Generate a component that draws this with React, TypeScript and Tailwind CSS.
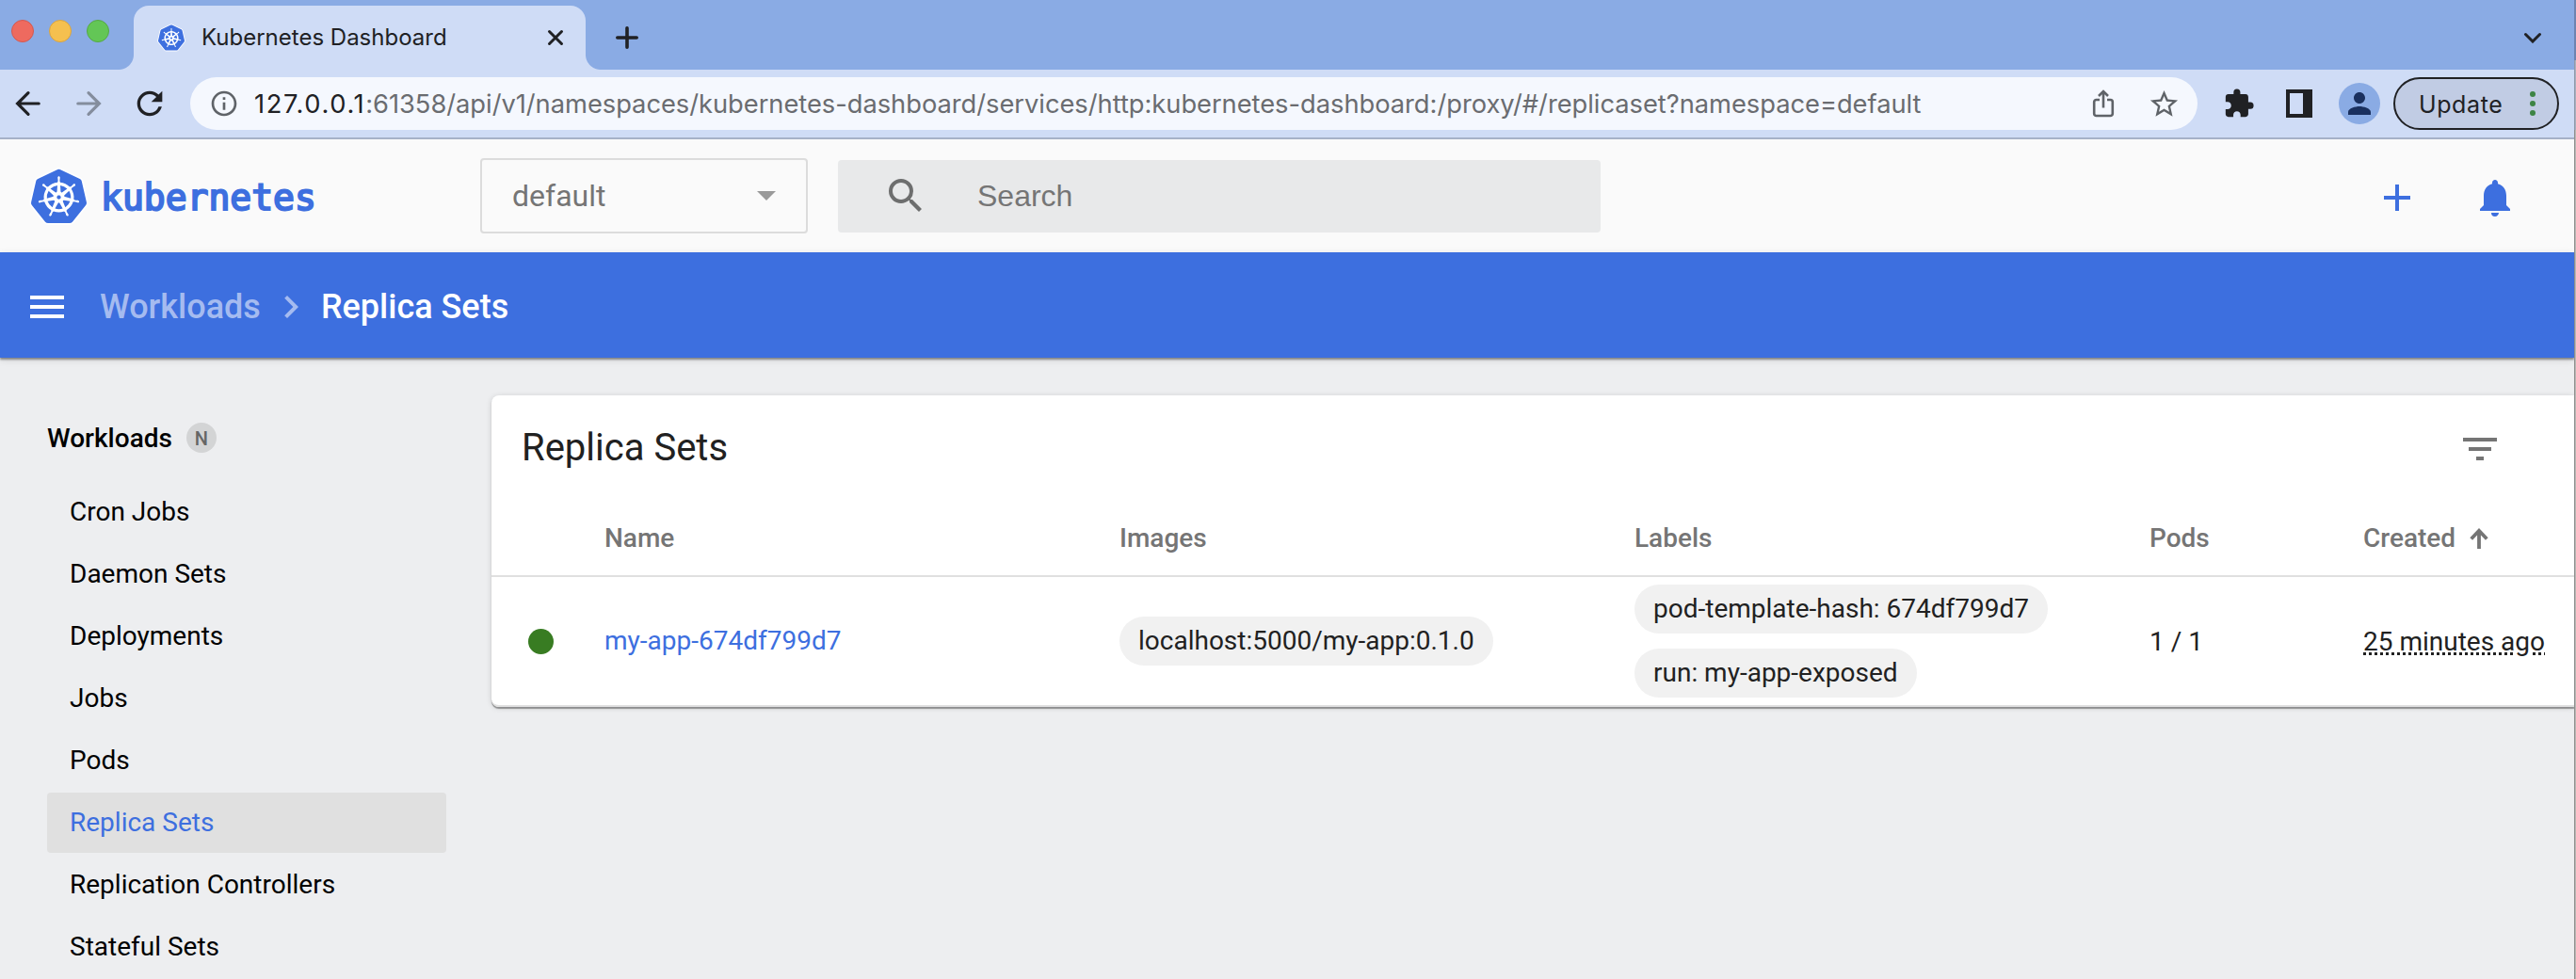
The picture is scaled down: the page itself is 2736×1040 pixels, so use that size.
import type { ReactNode } from 'react';
import { SiKubernetes } from 'react-icons/si';
import {
  MdAdd,
  MdChevronRight,
  MdExtension,
  MdFilterList,
  MdInfoOutline,
  MdMenu,
  MdNotifications,
  MdPerson,
  MdRefresh,
  MdSearch,
  MdStarOutline,
} from 'react-icons/md';

const navItems = [
  'Cron Jobs',
  'Daemon Sets',
  'Deployments',
  'Jobs',
  'Pods',
  'Replica Sets',
  'Replication Controllers',
  'Stateful Sets',
];

function KubeLogo({ className }: { className: string }) {
  return (
    <span className={`relative flex shrink-0 items-center justify-center ${className}`}>
      <span className="absolute inset-[20%] rounded-full bg-white" />
      <SiKubernetes className="relative h-full w-full overflow-visible stroke-white stroke-[1.4] text-[#3d6fdf] [paint-order:stroke]" />
    </span>
  );
}

function TabStrip() {
  return (
    <div className="flex h-[74px] shrink-0 items-end bg-[#8aabe4]">
      <div className="flex h-full w-[142px] shrink-0 gap-4 pl-3 pt-[21px]">
        <span className="size-6 rounded-full border border-[#d35950] bg-[#ee6a5f]" />
        <span className="size-6 rounded-full border border-[#d9a440] bg-[#f5c04f]" />
        <span className="size-6 rounded-full border border-[#55a944] bg-[#63c656]" />
      </div>
      <div className="relative flex h-[68px] w-[480px] shrink-0 items-center rounded-t-2xl bg-[#cfdcf6] pl-[26px]">
        <span className="absolute -left-4 bottom-0 size-4 bg-[radial-gradient(circle_at_0_0,transparent_15.5px,#cfdcf6_16.5px)]" />
        <span className="absolute -right-4 bottom-0 size-4 bg-[radial-gradient(circle_at_100%_0,transparent_15.5px,#cfdcf6_16.5px)]" />
        <KubeLogo className="size-7" />
        <span className="ml-[18px] w-[367px] font-[Inter,sans-serif] text-[24px] leading-none text-[#202124]">
          Kubernetes Dashboard
        </span>
        <svg viewBox="0 0 18 18" className="size-[18px]" fill="none" stroke="#202124" strokeWidth="3" strokeLinecap="round">
          <path d="M2.5 2.5l13 13M15.5 2.5l-13 13" />
        </svg>
      </div>
      <div className="flex h-[68px] flex-1 items-center justify-between pl-[31px] pr-[34px]">
        <svg viewBox="0 0 26 26" className="size-[26px]" fill="none" stroke="#202124" strokeWidth="3.6" strokeLinecap="round">
          <path d="M13 2.8v20.4M2.8 13h20.4" />
        </svg>
        <svg viewBox="0 0 20 12" className="h-3 w-5" fill="none" stroke="#202124" strokeWidth="3" strokeLinecap="round">
          <path d="M2.5 2.5l7.5 7.5l7.5-7.5" />
        </svg>
      </div>
    </div>
  );
}

function Arrow({ className }: { className: string }) {
  return (
    <svg viewBox="0 0 28 28" className={`size-7 ${className}`} fill="none" stroke="currentColor" strokeWidth="3.2" strokeLinecap="round">
      <path d="M2.6 14H25.2M14 2.7L2.6 14L14 25.3" />
    </svg>
  );
}

function Toolbar() {
  return (
    <div className="flex h-[74px] shrink-0 items-center border-b-2 border-[#a6b1c8] bg-[#cfdcf6] pl-4">
      <Arrow className="text-[#202124]" />
      <Arrow className="ml-9 rotate-180 text-[#848d9d]" />
      <MdRefresh className="ml-[31px] size-10 text-[#202124]" />
      <div className="ml-[23px] flex h-14 w-[2132px] shrink-0 items-center rounded-full bg-[#f5f8fe] pl-5 pr-[18px]">
        <MdInfoOutline className="size-8 text-[#5f6368]" />
        <div className="ml-4 flex-1 whitespace-nowrap pt-px font-[Inter,sans-serif] text-[27.3px] leading-none tracking-[-0.03px] text-[#6a6c70]">
          <span className="tracking-[1.6px] text-[#202124]">127.0.0.1</span>
          :61358/api/v1/namespaces/kubernetes-dashboard/services/http:kubernetes-dashboard:/proxy/#/replicaset?namespace=default
        </div>
        <svg viewBox="0 0 24 30" className="mr-[35px] h-[30px] w-6" fill="none" stroke="#5f6368" strokeWidth="2.6">
          <path d="M8 11H4.500a2.300 2.300 0 0 0-2.300 2.300v12.400a2.300 2.300 0 0 0 2.300 2.300h15a2.300 2.300 0 0 0 2.300-2.300V13.300a2.300 2.300 0 0 0-2.300-2.300H16M12 19.500V2.500M7 7l5-5l5 5" />
        </svg>
        <MdStarOutline className="size-[35px] text-[#5f6368]" />
      </div>
      <MdExtension className="ml-[27px] size-[34px] text-[#202124]" />
      <span className="ml-[33px] flex h-[30px] w-7 bg-[#202124] p-1">
        <span className="h-full w-[14px] bg-[#cfdcf6]" />
      </span>
      <span className="ml-7 flex size-11 items-center justify-center rounded-full bg-[#8aabe4]">
        <MdPerson className="size-9 text-[#1a305e]" />
      </span>
      <div className="ml-[14px] flex h-14 w-[176px] items-center rounded-full border-2 border-[#202124] bg-[#c1cce4] pl-[25px]">
        <span className="w-[118px] pt-0.5 font-[Inter,sans-serif] text-[25px] leading-none tracking-[0.6px] text-[#202124]">Update</span>
        <span className="flex flex-col gap-1">
          <span className="size-1.5 rounded-full bg-[#3d8445]" />
          <span className="size-1.5 rounded-full bg-[#3d8445]" />
          <span className="size-1.5 rounded-full bg-[#3d8445]" />
        </span>
      </div>
    </div>
  );
}

function Header() {
  return (
    <header className="flex h-[120px] shrink-0 items-center bg-[#fafafa] pl-[33px]">
      <KubeLogo className="size-[59px]" />
      <span className="ml-[15px] w-[403px] scale-y-[1.04] pt-px font-['DejaVu_Sans_Mono',monospace] text-[38px] leading-none text-[#3d6fdf] [-webkit-text-stroke:2px_#3d6fdf]">
        kubernetes
      </span>
      <div className="flex h-20 w-[348px] items-center justify-between rounded border-2 border-[#dcdcdc] pl-8 pr-8">
        <span className="font-[Roboto,sans-serif] text-[32px] leading-none text-[#757575]">default</span>
        <span className="h-0 w-0 border-x-[10px] border-t-[10px] border-x-transparent border-t-[#9a9a9a]" />
      </div>
      <div className="ml-8 flex h-[77px] w-[810px] items-center rounded bg-[#e8e9ea] pl-12">
        <MdSearch className="size-12 text-[#6d6e6e]" />
        <span className="ml-[52px] font-['Liberation_Sans',sans-serif] text-[32px] leading-none text-[#757575]">Search</span>
      </div>
      <div className="ml-auto mr-[60px] flex gap-14 pt-1 text-[#3d6fdf]">
        <MdAdd className="size-12" />
        <MdNotifications className="size-12" />
      </div>
    </header>
  );
}

function ActionBar() {
  return (
    <div className="relative flex h-28 shrink-0 items-center bg-[#3d6fdf] pl-[26px] pt-1 font-[Roboto,sans-serif] text-[36px] font-medium leading-none text-white shadow-[0_2px_2px_rgba(0,0,0,0.4),0_2px_8px_rgba(0,0,0,0.12)]">
      <MdMenu className="size-12" />
      <span className="ml-8 text-[#a5bbf0]">Workloads</span>
      <MdChevronRight className="ml-2 size-12 text-[#a5bbf0]" />
      <span className="ml-2">Replica Sets</span>
    </div>
  );
}

function Sidebar() {
  return (
    <nav className="w-[522px] shrink-0 pl-[50px] pr-12 pt-[53px] font-[Roboto,sans-serif] text-[28px] leading-none text-black">
      <div className="mb-[15px] flex h-16 items-center gap-4">
        <span className="pt-0.5 font-medium">Workloads</span>
        <span className="-ml-px flex size-8 items-center justify-center rounded-full bg-[#d3d4d5] pt-0.5 text-[20px] font-medium text-[#666]">N</span>
      </div>
      <ul className="flex flex-col gap-0.5">
        {navItems.map((item) => (
          <li
            key={item}
            className={`flex h-16 items-center rounded pl-6 ${item === 'Replica Sets' ? 'bg-[#e0e0e0] text-[#3d6fdf]' : ''}`}
          >
            {item}
          </li>
        ))}
      </ul>
    </nav>
  );
}

function Chip({ children }: { children: ReactNode }) {
  return <span className="flex h-[52px] items-center whitespace-nowrap rounded-full bg-[#f1f1f1] px-5">{children}</span>;
}

function ReplicaSetCard() {
  return (
    <section className="mt-10 h-[331px] flex-1 rounded-l-lg bg-white font-[Roboto,sans-serif] leading-none text-[#212121] shadow-[0_2px_1px_rgba(0,0,0,0.35),0_1px_6px_rgba(0,0,0,0.14)]">
      <div className="flex h-28 items-center justify-between pl-8 pr-[76px]">
        <h2 className="text-[40px]">Replica Sets</h2>
        <MdFilterList className="mt-0.5 size-12 text-[#757575]" />
      </div>
      <div className="grid h-[81px] grid-cols-[120px_547px_547px_547px_227px_1fr] items-center border-b-2 border-[#e0e0e0] text-[28px] font-medium text-[#757575]">
        <span />
        <span>Name</span>
        <span>Images</span>
        <span>Labels</span>
        <span>Pods</span>
        <span className="flex items-center gap-[14px]">
          Created
          <svg viewBox="0 0 22 24" className="h-6 w-[22px]" fill="none" stroke="currentColor" strokeWidth="3.8">
            <path d="M11 23V3M2.7 12.5L11 3.8L19.3 12.5" />
          </svg>
        </span>
      </div>
      <div className="grid h-[138px] grid-cols-[120px_547px_547px_547px_227px_1fr] items-center rounded-bl-lg border-b-2 border-[#e0e0e0] text-[28px]">
        <span className="ml-[39px] size-[27px] rounded-full bg-[#387c22]" />
        <a className="text-[#3d6fdf]">my-app-674df799d7</a>
        <span className="flex">
          <Chip>localhost:5000/my-app:0.1.0</Chip>
        </span>
        <span className="flex flex-col items-start gap-4">
          <Chip>pod-template-hash: 674df799d7</Chip>
          <Chip>run: my-app-exposed</Chip>
        </span>
        <span className="pt-px">1 / 1</span>
        <span className="whitespace-nowrap pt-px underline decoration-dotted decoration-[3px] underline-offset-[2px]">25 minutes ago</span>
      </div>
    </section>
  );
}

export default function App() {
  return (
    <div className="flex h-[1040px] w-[2736px] overflow-hidden bg-[#edeef0]">
      <div className="flex w-[2734px] shrink-0 flex-col overflow-hidden">
        <TabStrip />
        <Toolbar />
        <Header />
        <ActionBar />
        <main className="flex flex-1 items-start">
          <Sidebar />
          <ReplicaSetCard />
        </main>
      </div>
      <div className="flex w-0.5 flex-col">
        <span className="h-16 bg-[#6d84b0]" />
        <span className="h-[74px] border-l border-[#8f99ab] bg-[#a9b0bd]" />
        <span className="flex-1 border-l border-[#8e8e8e] bg-[#b9b8b4]" />
      </div>
    </div>
  );
}
